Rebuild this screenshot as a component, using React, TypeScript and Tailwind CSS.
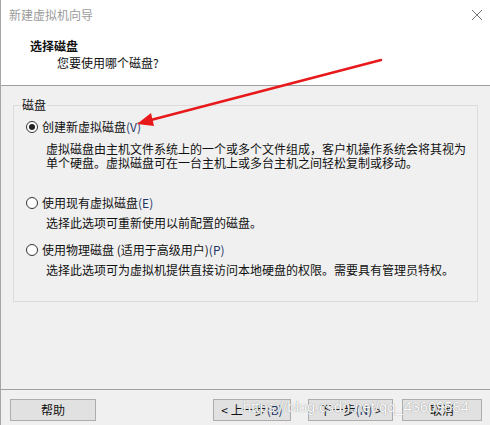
import React from 'react';

const font = { fontFamily: '"Noto Sans CJK SC", "Noto Sans", sans-serif' };

function Radio({ checked }: { checked?: boolean }) {
    return (
        <span className="inline-flex h-[12px] w-[12px] shrink-0 items-center justify-center rounded-full border border-[#333] bg-white">
            {checked && <span className="h-[6px] w-[6px] rounded-full bg-[#222]"></span>}
        </span>
    );
}

function Option({ label, hotkey, checked }: { label: string; hotkey: string; checked?: boolean }) {
    return (
        <div className="flex h-[16px] items-center gap-[4px] pl-[12px] text-[12px] leading-[16px] text-[#111]">
            <Radio checked={checked} />
            <span>
                {label}
                <span className="text-[#1d3766]">({hotkey})</span>
            </span>
        </div>
    );
}

function Button({ children, className = '' }: { children: React.ReactNode; className?: string }) {
    return (
        <button className={`flex h-[22px] items-center justify-center border border-[#adadad] bg-[#e1e1e1] text-[12px] text-[#111] ${className}`}>
            {children}
        </button>
    );
}

export default function App() {
    return (
        <div className="relative flex h-[425px] w-[490px] flex-col overflow-hidden border-l border-[#a6a6a6] bg-[#f0f0f0]" style={font}>
            {/* Title bar */}
            <div className="flex h-[30px] items-center justify-between bg-white pl-[8px] pr-[6px]">
                <span className="text-[12px] text-[#9b9b9b]">新建虚拟机向导</span>
                <svg width="12" height="12" viewBox="0 0 12 12" className="mr-[1px]">
                    <path d="M1 1 L11 11 M11 1 L1 11" stroke="#7a7a7a" strokeWidth="1" fill="none" />
                </svg>
            </div>

            {/* Header */}
            <div className="h-[56px] border-b border-[#a0a0a0] bg-white pl-[29px] pt-[8px] text-[12px] leading-[16px] text-[#111]">
                <div className="font-bold">选择磁盘</div>
                <div className="pl-[27px] pt-[1px]">您要使用哪个磁盘?</div>
            </div>

            {/* Body */}
            <div className="flex-1 px-[12px]">
                <fieldset className="mt-[11px] h-[205px] border border-[#dcdcdc] pr-[10px]">
                    <legend className="ml-[7px] px-[1px] text-[12px] leading-[16px] text-[#111]">磁盘</legend>
                    <div className="pt-[6px]">
                        <Option label="创建新虚拟磁盘" hotkey="V" checked />
                        <div className="mt-[7px] pl-[32px] text-[12px] leading-[14px] text-[#111]">
                            <div>虚拟磁盘由主机文件系统上的一个或多个文件组成，客户机操作系统会将其视为</div>
                            <div>单个硬盘。虚拟磁盘可在一台主机上或多台主机之间轻松复制或移动。</div>
                        </div>
                        <div className="mt-[25px]">
                            <Option label="使用现有虚拟磁盘" hotkey="E" />
                        </div>
                        <div className="mt-[5px] pl-[32px] text-[12px] leading-[14px] text-[#111]">
                            选择此选项可重新使用以前配置的磁盘。
                        </div>
                        <div className="mt-[12px]">
                            <Option label="使用物理磁盘 (适用于高级用户)" hotkey="P" />
                        </div>
                        <div className="mt-[5px] pl-[32px] text-[12px] leading-[14px] text-[#111]">
                            选择此选项可为虚拟机提供直接访问本地硬盘的权限。需要具有管理员特权。
                        </div>
                    </div>
                </fieldset>
            </div>

            {/* Footer */}
            <div className="flex h-[36px] items-start border-t border-[#a0a0a0] pl-[9px] pt-[9px]">
                <Button className="w-[86px]">帮助</Button>
                <Button className="ml-[117px] w-[78px]">&lt; 上一步<span className="text-[#1d3766]">(B)</span></Button>
                <Button className="ml-[17px] w-[85px]">下一步<span className="text-[#1d3766]">(N)</span>&nbsp;&gt;</Button>
                <Button className="ml-[9px] w-[80px]">取消</Button>
            </div>

            {/* Watermark */}
            <div
                className="pointer-events-none absolute left-[242px] top-[397px] text-[14.5px] tracking-[0.1px] text-[#fafafa] [text-shadow:0_0_1px_#7c7c7c]"
                style={{ fontFamily: '"Liberation Sans", Arial, sans-serif' }}
            >
                https://blog.csdn.net/qq_43609584
            </div>

            {/* Red arrow annotation */}
            <svg className="pointer-events-none absolute left-0 top-0" width="490" height="425">
                <line x1="380" y1="60" x2="146" y2="121" stroke="#e8191a" strokeWidth="2.5" strokeLinecap="round" />
                <polygon points="136,124 150,113 153,126" fill="#e8191a" />
            </svg>
        </div>
    );
}
